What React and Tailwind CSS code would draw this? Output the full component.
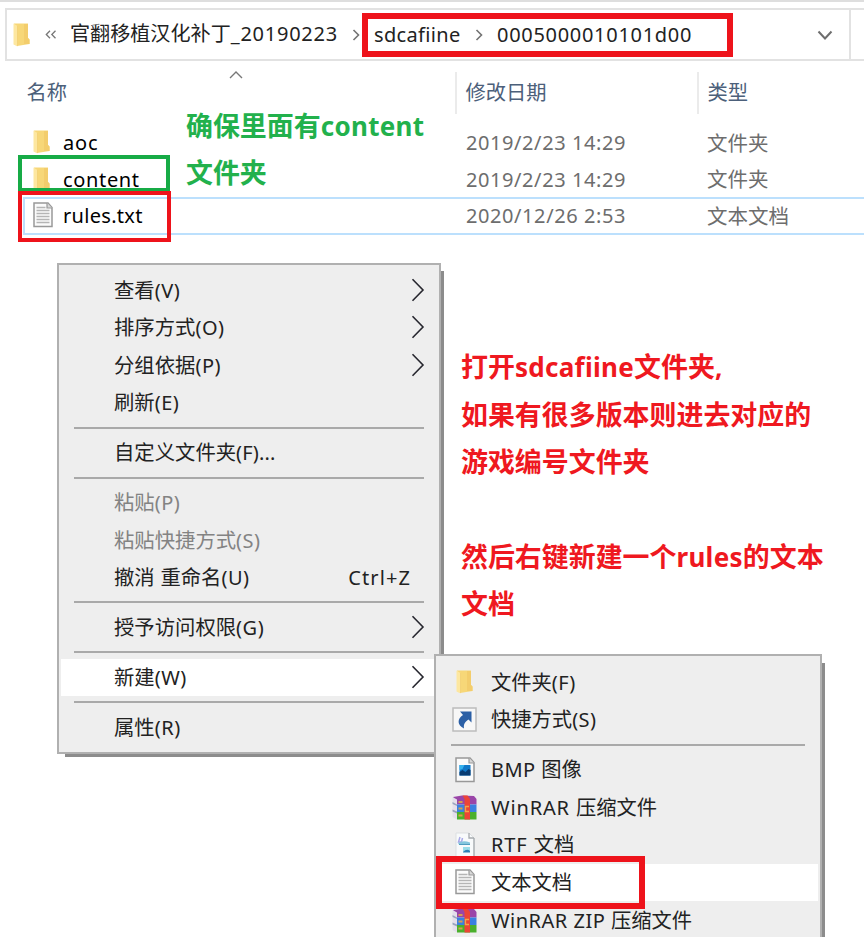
import { Fragment } from "react";

const isHan = (s) => /[\u3000-\u9fff\uff00-\uffef]/.test(s);

/* Splits a label into Han and Latin runs so each gets its own size and tracking. */
function Label({ text, han = "text-[20.3px]", latin = "text-[20px] tracking-[0.25px]" }) {
  const runs = text.match(/[\u3000-\u9fff\uff00-\uffef]+|[^\u3000-\u9fff\uff00-\uffef]+/g);
  return (
    <span className="whitespace-pre">
      {runs.map((run, i) => (
        <span key={i} className={isHan(run) ? han : latin}>
          {run}
        </span>
      ))}
    </span>
  );
}

function FolderIcon() {
  return (
    <svg width="17" height="24" viewBox="0 0 17 24" className="shrink-0">
      <path d="M1 0.500h14v14.500l1.500 1.500v4.500L4 23z" fill="#f7d778" />
      <path d="M11 1h4v14l1.500 1.500v4.500H11z" fill="#f3cd6c" />
      <path d="M0.500 0.500l4 2.500v20.500l-4-2z" fill="#fde7a0" />
      <path d="M4.500 3v20" stroke="#f2cf75" strokeWidth="0.800" />
    </svg>
  );
}

function PageShape() {
  return (
    <>
      <path d="M1 1h14l4 4.500v19H1z" fill="#fbfbfb" stroke="#999" strokeWidth="1.500" />
      <path d="M14 1v5h5" fill="#d8d8d8" stroke="#999" strokeWidth="1.200" />
    </>
  );
}

function TextIcon() {
  return (
    <svg width="20" height="26" viewBox="0 0 20 26" className="shrink-0">
      <PageShape />
      <path d="M3.500 5.500h9M3.500 8.500h13M3.500 11.500h13M3.500 14.500h13M3.500 17.500h13M3.500 20.500h13" stroke="#b5b5b5" strokeWidth="1.500" />
    </svg>
  );
}

function BmpIcon() {
  return (
    <svg width="20" height="26" viewBox="0 0 20 26" className="shrink-0">
      <PageShape />
      <rect x="4.500" y="8" width="11" height="10.500" fill="#1179c9" />
      <path d="M4.500 8h5l-2 4-3 1z" fill="#35b1ed" />
      <path d="M4.500 18.500v-3.500l3-2 3 2 3-3 2 1v5.500z" fill="#093c72" />
    </svg>
  );
}

function RtfIcon() {
  return (
    <svg width="20" height="26" viewBox="0 0 20 26" className="shrink-0">
      <path d="M1 1h13l5 5v19H1z" fill="#f8fafb" stroke="#dcdfe1" />
      <path d="M14 1v5h5M19 6v19" fill="none" stroke="#a5aaae" strokeWidth="1.300" />
      <path d="M5 5l-1.500 5h3l1-4" fill="none" stroke="#a9a9e8" strokeWidth="1.500" />
      <path d="M3 11q5-3 12-.500v2H4z" fill="#84c6dd" />
      <path d="M4 12.500h11" stroke="#4f9cbf" />
      <path d="M8 15h7v5H8z" fill="#9adce8" />
      <path d="M8 20q4-4 7-1v1.500H8z" fill="#2e80b5" />
    </svg>
  );
}

function ShortcutIcon() {
  return (
    <svg width="25" height="25" viewBox="0 0 25 25" className="shrink-0">
      <rect x="1" y="1" width="23" height="23" fill="#f7f7f7" stroke="#bcbcbc" strokeWidth="1.500" />
      <path d="M8 4.500h11.500V15.500l-3-3c-4 2.500-5 5-4.500 9C5 18 5 12 11 8z" fill="#2b5fa5" />
    </svg>
  );
}

function RarIcon() {
  return (
    <svg width="25" height="25" viewBox="0 0 25 25" className="shrink-0">
      <path d="M1 2l9-1.500L22 1l2.500 3v5.500H5z" fill="#9a45a8" />
      <path d="M5 9.500h19.500V17H5z" fill="#3a80e0" />
      <path d="M5 17h19.500v7.500H5z" fill="#4bb02c" />
      <path d="M0.500 2L5 4.500v5L0.500 7zM0.500 9L5 11v5.500L0.500 14.500zM0.500 16.500L5 18.500v6L0.500 22z" fill="#e4deeb" />
      <path d="M0.500 7L5 9.500V11L0.500 9zM0.500 14.500L5 16.500v2l-4.500-2z" fill="#9aa3bd" />
      <path d="M10.500 0.500h5l2.500 3.500v20.500h-5.500V4z" fill="#ec4437" />
      <path d="M6.500 7h4M6.500 13.500h4M6.500 20.500h4" stroke="#d6a050" strokeWidth="1.800" />
      <path d="M17 11.500h-3.500v5H17" fill="none" stroke="#f2a648" strokeWidth="1.300" />
    </svg>
  );
}

function SubmenuArrow() {
  return (
    <svg width="14" height="24" viewBox="0 0 14 24" className="mb-[1px] shrink-0">
      <path d="M1.500 1.200L12 12 1.500 22.800" fill="none" stroke="#26262e" strokeWidth="1.600" />
    </svg>
  );
}

function Crumb({ className }) {
  return (
    <svg width="8" height="12" viewBox="0 0 8 12" className={className}>
      <path d="M1.500 1l5 5-5 5" fill="none" stroke="#737373" strokeWidth="1.600" />
    </svg>
  );
}

const files = [
  { name: "aoc", date: "2019/2/23 14:29", type: "文件夹", track: "tracking-[0.8px]" },
  { name: "content", date: "2019/2/23 14:29", type: "文件夹", track: "tracking-[0.65px]" },
  { name: "rules.txt", date: "2020/12/26 2:53", type: "文本文档", track: "tracking-[0.3px]", selected: true },
];

const menu = [
  [
    { text: "查看(V)", arrow: true },
    { text: "排序方式(O)", arrow: true },
    { text: "分组依据(P)", arrow: true },
    { text: "刷新(E)" },
  ],
  [{ text: "自定义文件夹(F)..." }],
  [
    { text: "粘贴(P)", disabled: true },
    { text: "粘贴快捷方式(S)", disabled: true },
    { text: "撤消 重命名(U)", hint: "Ctrl+Z" },
  ],
  [{ text: "授予访问权限(G)", arrow: true }],
  [{ text: "新建(W)", arrow: true, active: true }],
  [{ text: "属性(R)" }],
];

const newMenu = [
  [
    { text: "文件夹(F)", Icon: FolderIcon },
    { text: "快捷方式(S)", Icon: ShortcutIcon },
  ],
  [
    { text: "BMP 图像", Icon: BmpIcon },
    { text: "WinRAR 压缩文件", Icon: RarIcon, latin: "text-[20px] tracking-[0.85px]" },
    { text: "RTF 文档", Icon: RtfIcon, latin: "text-[20px] tracking-[0.9px]" },
    { text: "文本文档", Icon: TextIcon, active: true },
    { text: "WinRAR ZIP 压缩文件", Icon: RarIcon, latin: "text-[20px] tracking-[0.5px]" },
  ],
];

function Note({ lines, className }) {
  return (
    <div className={`absolute font-bold ${className}`}>
      {lines.map((line, i) => (
        <div key={i} className="flex h-[47.300px] items-center">
          {line && <Label text={line} han="text-[26.95px]" latin="text-[26px] tracking-[0.3px]" />}
        </div>
      ))}
    </div>
  );
}

export default function App() {
  return (
    <div className="relative h-[937px] w-[864px] overflow-hidden bg-white font-['Noto_Sans','Noto_Sans_CJK_SC',sans-serif] text-[20px] leading-none text-[#222]">
      <div className="h-[2px] bg-[#dedede]" />

      <div className="mt-[6px] ml-[5px] flex h-[53px] items-center border-2 border-r-0 border-[#e2e2e2]">
        <div className="ml-[6px]"><FolderIcon /></div>
        <svg width="12" height="9" viewBox="0 0 12 9" className="ml-[15px]">
          <path d="M5 .700L1.300 4.500 5 8.300M10.500 .700L6.800 4.500l3.700 3.800" fill="none" stroke="#777" strokeWidth="1.300" />
        </svg>
        <div className="ml-[13px] w-[268px]">
          <Label text="官翻移植汉化补丁_20190223" han="text-[20.1px]" latin="text-[20px] tracking-[0.75px]" />
        </div>
        <Crumb className="ml-[14px]" />
        <div className="ml-[14px] w-[88px]">
          <Label text="sdcafiine" latin="text-[20px] tracking-[0.35px]" />
        </div>
        <Crumb className="ml-[13px]" />
        <div className="ml-[14px] w-[210px]">
          <Label text="0005000010101d00" latin="text-[20px] tracking-[0.7px]" />
        </div>
        <svg width="16" height="11" viewBox="0 0 16 11" className="mt-[2px] ml-auto mr-[16px]">
          <path d="M1.500 1.500L8 8.500l6.500-7" fill="none" stroke="#6e6e6e" strokeWidth="2" />
        </svg>
        <div className="mr-[13px] h-full w-[2px] bg-[#e2e2e2]" />
      </div>

      <div className="flex h-[63px] items-center text-[#4c607a]">
        <div className="relative w-[455px] pl-[26.500px]">
          <Label text="名称" />
          <svg width="14" height="8" viewBox="0 0 14 8" className="absolute -top-[11px] left-[229px]">
            <path d="M1 7l6-6 6 6" fill="none" stroke="#777" strokeWidth="1.400" />
          </svg>
        </div>
        <div className="flex h-[42px] w-[242px] items-center border-l-2 border-[#ebebeb] pl-[8.500px]">
          <Label text="修改日期" />
        </div>
        <div className="flex h-[42px] items-center border-l-2 border-[#ebebeb] pl-[8.500px]">
          <Label text="类型" />
        </div>
      </div>

      <div className="ml-[23px]">
        {files.map((f) => (
          <div
            key={f.name}
            className={`flex items-center border-2 border-r-0 ${f.selected ? "h-[38px] border-[#bce0fd]" : "h-[36.500px] border-transparent"}`}
          >
            <div className="flex w-[38px] pl-[8px]">
              {f.selected ? <div className="-mt-[3px]"><TextIcon /></div> : <FolderIcon />}
            </div>
            <div className={`w-[402px] text-black ${f.selected ? "" : "pt-[2px]"}`}>
              <Label text={f.name} latin={`text-[20px] ${f.track}`} />
            </div>
            <div className={`w-[242px] pl-[1px] text-[#6d6d6d] ${f.selected ? "" : "pt-[2px]"}`}>
              <Label text={f.date} latin="text-[20px] tracking-[0.58px]" />
            </div>
            <div className={`text-[#6d6d6d] ${f.selected ? "" : "pt-[2px]"}`}>
              <Label text={f.type} han="text-[20.5px]" />
            </div>
          </div>
        ))}
      </div>

      <Note className="top-[103px] left-[186px] text-[#22b14c]" lines={["确保里面有content", "文件夹"]} />
      <Note
        className="top-[344.200px] left-[461px] text-[#ef1820]"
        lines={["打开sdcafiine文件夹,", "如果有很多版本则进去对应的", "游戏编号文件夹", "", "然后右键新建一个rules的文本", "文档"]}
      />

      <div className="absolute top-[271px] left-[65px] h-[486px] w-[379px] bg-[#8c8c8c] blur-[0.7px]" />
      <div className="absolute top-[263px] left-[57px] h-[491px] w-[384px] border-2 border-[#b0b0b0] bg-[#eee] px-[2px] pt-[6.500px]">
        {menu.map((group, g) => (
          <Fragment key={g}>
            {g > 0 && (
              <div className="flex h-[12.400px] items-center pr-[13px] pl-[13px]">
                <div className="h-[2px] w-full bg-[#a9a9a9]" />
              </div>
            )}
            {group.map((item) => (
              <div
                key={item.text}
                className={`flex h-[37.500px] items-center justify-between pr-[12.500px] pl-[53px] ${item.active ? "bg-white" : ""} ${item.disabled ? "text-[#838383]" : ""}`}
              >
                <Label
                  text={item.text}
                  han="text-[20.35px]"
                  latin={item.text.endsWith("...") ? "text-[20px] tracking-[0.15px]" : "text-[20px] tracking-[0.5px]"}
                />
                {item.arrow && <SubmenuArrow />}
                {item.hint && <span className="mr-[13.500px] tracking-[1.1px]">{item.hint}</span>}
              </div>
            ))}
          </Fragment>
        ))}
      </div>

      <div className="absolute top-[663px] left-[442px] h-[300px] w-[383px] bg-[#8c8c8c] blur-[0.7px]" />
      <div className="absolute top-[654px] left-[434px] h-[300px] w-[388px] border-2 border-[#b0b0b0] bg-[#eee] px-[2px] pt-[7.300px]">
        {newMenu.map((group, g) => (
          <Fragment key={g}>
            {g > 0 && (
              <div className="flex h-[12.400px] items-center px-[13px]">
                <div className="h-[2px] w-full bg-[#a9a9a9]" />
              </div>
            )}
            {group.map(({ text, Icon, active, latin }) => (
              <div key={text} className={`flex h-[37.600px] items-center ${active ? "bg-white" : ""}`}>
                <div className="flex w-[53px] justify-center">
                  <Icon />
                </div>
                <Label text={text} latin={latin || "text-[20px] tracking-[0.45px]"} />
              </div>
            ))}
          </Fragment>
        ))}
      </div>

      <div className="absolute top-[13px] left-[362px] h-[44px] w-[371px] border-6 border-[#ee131b]" />
      <div className="absolute top-[155px] left-[18px] h-[37px] w-[152px] border-4 border-[#17ab46]" />
      <div className="absolute top-[191px] left-[18px] h-[51px] w-[153px] border-4 border-[#ee131b]" />
      <div className="absolute top-[856px] left-[436px] h-[53px] w-[209px] border-6 border-[#ee131b]" />
    </div>
  );
}
